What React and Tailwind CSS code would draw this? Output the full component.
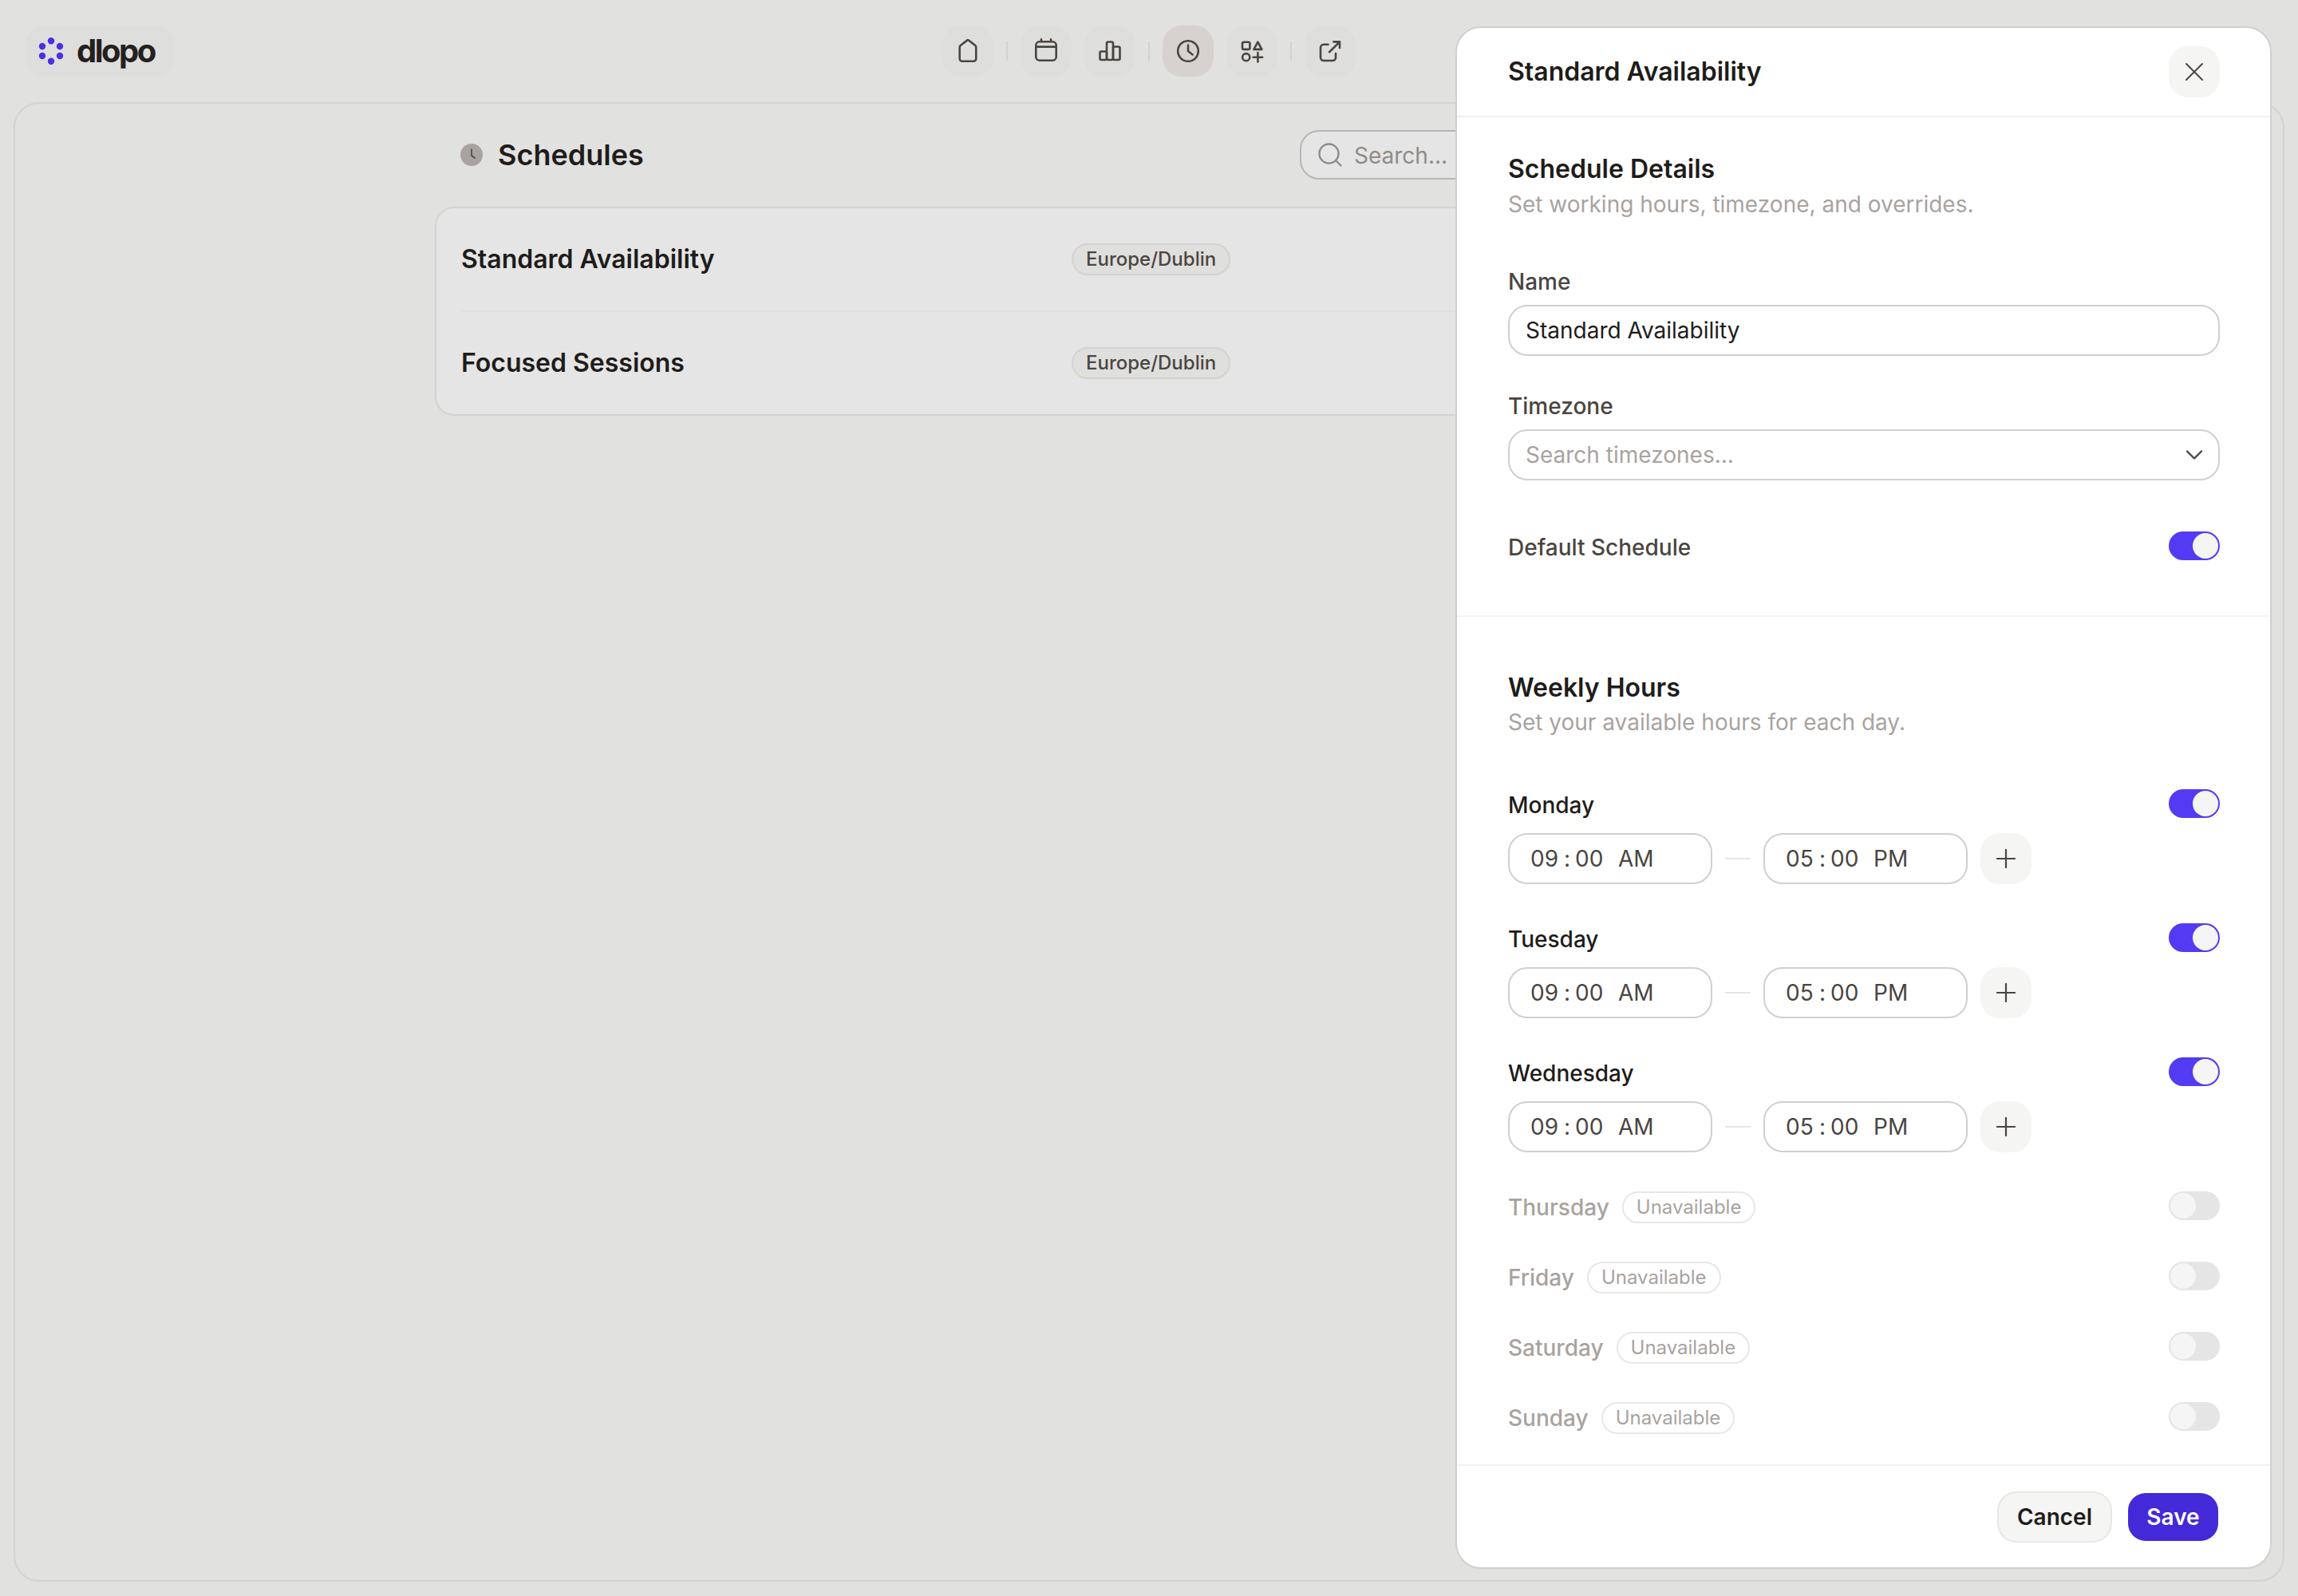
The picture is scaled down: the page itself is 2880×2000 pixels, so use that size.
import { X, Plus, Search, ChevronDown } from "lucide-react";

const ink = "#4a4541";

function HomeIcon() {
    return (
        <svg width="32" height="32" viewBox="0 0 32 32" fill="none" stroke={ink} strokeWidth="2.6" strokeLinejoin="round">
            <path d="M15 2.6a1.6 1.6 0 0 1 2 0l8 6.2c.8.6 1.3 1.5 1.3 2.5V25.5a3.2 3.2 0 0 1-3.2 3.2H8.9a3.2 3.2 0 0 1-3.2-3.2V11.3c0-1 .5-1.9 1.3-2.5z" />
        </svg>
    );
}

function CalendarIcon() {
    return (
        <svg width="32" height="32" viewBox="0 0 32 32" fill="none" stroke={ink} strokeWidth="2.6" strokeLinecap="round">
            <rect x="3.3" y="4.3" width="25.4" height="23.4" rx="4.5" />
            <path d="M3.3 10.6H28.7M10 1.4V4M22 1.4V4" />
        </svg>
    );
}

function ChartIcon() {
    return (
        <svg width="32" height="32" viewBox="0 0 32 32" fill="none" stroke={ink} strokeWidth="2.6" strokeLinejoin="round">
            <rect x="3.5" y="16.5" width="8.5" height="10.5" rx="1.5" />
            <rect x="12" y="4.5" width="8" height="22.5" rx="2" />
            <rect x="20" y="10.5" width="8.5" height="16.5" rx="1.5" />
        </svg>
    );
}

function ClockIcon() {
    return (
        <svg width="32" height="32" viewBox="0 0 32 32" fill="none" stroke={ink} strokeWidth="2.6" strokeLinecap="round" strokeLinejoin="round">
            <circle cx="16" cy="16" r="12.8" />
            <path d="M16 8.5V16l5.6 4.4" />
        </svg>
    );
}

function ShapesIcon() {
    return (
        <svg width="32" height="32" viewBox="0 0 32 32" fill="none" stroke={ink} strokeWidth="2.6" strokeLinecap="round" strokeLinejoin="round">
            <rect x="4" y="4.7" width="9.4" height="9.2" rx="2" />
            <path d="M23.4 4.7l5 9.2H18.4z" />
            <circle cx="8.7" cy="23.7" r="4.6" />
            <path d="M23.4 18v11.4M17.7 23.7h11.4" />
        </svg>
    );
}

function ExternalIcon() {
    return (
        <svg width="32" height="32" viewBox="0 0 32 32" fill="none" stroke={ink} strokeWidth="2.6" strokeLinecap="round" strokeLinejoin="round">
            <path d="M13.5 7.8H8a4 4 0 0 0-4 4V24a4 4 0 0 0 4 4h11a4 4 0 0 0 4-4v-5" />
            <path d="M15 17.2L28 4.4M20.4 4.4H28V12" />
        </svg>
    );
}

function Logo() {
    const dots = [[20, 7.2], [31, 14], [31, 26], [20, 32.8], [9, 26], [9, 14]];
    return (
        <svg width="40" height="40" viewBox="0 0 40 40" fill="#4a30e2">
            {dots.map(([cx, cy]) => (
                <circle key={`${cx}-${cy}`} cx={cx} cy={cy} r="4.2" />
            ))}
        </svg>
    );
}

function NavButton({ active, children }) {
    return (
        <div className={`w-16 h-16 rounded-3xl flex items-center justify-center ${active ? "bg-[#d5d2d0]" : "bg-[#dededc]"}`}>
            {children}
        </div>
    );
}

function NavDivider() {
    return <div className="w-0.5 h-6 bg-[#d5d2d0]" />;
}

function Toggle({ on }) {
    return (
        <div className={`w-16 h-9 rounded-full flex items-center px-0.5 shrink-0 ${on ? "bg-[#523bf2] justify-end" : "bg-[#e5e5e5] justify-start"}`}>
            <div className="w-8 h-8 rounded-full bg-[#f5f5f5]" />
        </div>
    );
}

function TimeField({ hour, period }) {
    return (
        <div className="w-64 h-16 rounded-3xl border-2 border-[#d2cfcd] flex items-center pl-[26px] text-[28px] text-[#4a4541] bg-white">
            <span className="w-[36px]">{hour}</span>
            <span className="w-[20px] text-center">:</span>
            <span className="w-[36px]">00</span>
            <span className="ml-[18px]">{period}</span>
        </div>
    );
}

function DayRow({ day }) {
    return (
        <div>
            <div className="flex items-center justify-between h-9">
                <span className="text-[28px] leading-9 font-medium text-[#1f1c1a] pt-1">{day}</span>
                <Toggle on />
            </div>
            <div className="flex items-center mt-[19px] mb-px">
                <TimeField hour="09" period="AM" />
                <div className="w-8 h-0.5 bg-[#e5e5e5] mx-4" />
                <TimeField hour="05" period="PM" />
                <button className="w-16 h-16 rounded-3xl bg-[#f5f5f4] flex items-center justify-center ml-4">
                    <Plus size={38} strokeWidth={1.4} color={ink} />
                </button>
            </div>
        </div>
    );
}

function OffRow({ day }) {
    return (
        <div className="flex items-start justify-between h-10">
            <div className="flex items-center gap-4">
                <span className="text-[28px] leading-9 font-medium text-[#a8a3a0]">{day}</span>
                <span className="h-10 px-4 rounded-full border-2 border-[#e7e7e6] text-2xl leading-9 text-[#a8a3a0]">Unavailable</span>
            </div>
            <Toggle />
        </div>
    );
}

function ScheduleRow({ name }) {
    return (
        <div className="flex items-center h-32">
            <div className="w-[765px] text-[32px] font-semibold text-[#1f1c1a]">{name}</div>
            <span className="h-10 px-4 rounded-full border-2 border-[#d5d2d0] bg-[#dfdfdd] text-2xl leading-9 font-medium text-[#4a4541]">Europe/Dublin</span>
        </div>
    );
}

export default function App() {
    return (
        <div className="relative w-[2880px] h-[2000px] overflow-hidden bg-[#e1e1df] font-['Inter',sans-serif] flex flex-col">
            <header className="h-32 shrink-0 flex items-start pt-8 px-8">
                <div className="flex-1">
                    <div className="inline-flex items-center h-16 w-[187px] rounded-3xl bg-[#dededc] pl-3 gap-[12px]">
                        <Logo />
                        <span className="text-[40px] leading-none font-bold tracking-[-2.5px] text-[#24201e]">dlopo</span>
                    </div>
                </div>
                <nav className="flex items-center gap-4">
                    <NavButton><HomeIcon /></NavButton>
                    <NavDivider />
                    <NavButton><CalendarIcon /></NavButton>
                    <NavButton><ChartIcon /></NavButton>
                    <NavDivider />
                    <NavButton active><ClockIcon /></NavButton>
                    <NavButton><ShapesIcon /></NavButton>
                    <NavDivider />
                    <NavButton><ExternalIcon /></NavButton>
                </nav>
                <div className="flex-1" />
            </header>

            <main className="mx-[17px] mb-[18px] flex-1 rounded-[32px] border-2 border-[#d5d2d0] pt-[33px]">
                <div className="w-[1790px] mx-auto">
                    <div className="flex items-center justify-between h-[62px] pl-8">
                        <div className="flex items-center gap-[19px]">
                            <svg width="28" height="28" viewBox="0 0 28 28">
                                <circle cx="14" cy="14" r="14" fill="#a8a3a0" />
                                <path d="M14 7v8l4 3" fill="none" stroke="#4a4541" strokeWidth="1.6" strokeLinecap="round" strokeLinejoin="round" />
                            </svg>
                            <h1 className="text-4xl font-semibold text-[#1f1c1a]">Schedules</h1>
                        </div>
                        <div className="w-[706px] h-[62px] rounded-3xl border-2 border-[#b8b6b4] bg-[#e5e5e5] flex items-center pl-[18px] gap-[12px]">
                            <Search size={36} strokeWidth={1.6} color="#8f8b88" />
                            <input readOnly placeholder="Search..." className="flex-1 bg-transparent outline-none text-[28px] pt-0.5 placeholder:text-[#8f8b88]" />
                        </div>
                    </div>

                    <div className="mt-[34px] rounded-3xl border-2 border-[#d5d2d0] bg-[#e5e5e5] px-[31px]">
                        <ScheduleRow name="Standard Availability" />
                        <div className="h-0.5 bg-[#e0e0de]" />
                        <ScheduleRow name="Focused Sessions" />
                    </div>
                </div>
            </main>

            <aside className="absolute top-[33px] left-[1824px] w-[1023px] h-[1933px] rounded-[32px] border-2 border-[#d2cfcd] bg-white flex flex-col overflow-hidden">
                <div className="h-[112px] shrink-0 border-b-2 border-[#f0f0ef] flex items-center justify-between pl-16 pr-[63px]">
                    <h2 className="text-[32px] font-semibold text-[#1f1c1a]">Standard Availability</h2>
                    <button className="w-16 h-16 rounded-3xl bg-[#f5f5f4] flex items-center justify-center">
                        <X size={40} strokeWidth={1.2} color={ink} />
                    </button>
                </div>

                <div className="flex-1 flex flex-col">
                    <section className="h-[626px] shrink-0 border-b-2 border-[#f5f5f4] pl-16 pr-[63px] pt-[45px]">
                        <h3 className="text-[32px] leading-10 font-semibold text-[#1f1c1a]">Schedule Details</h3>
                        <p className="mt-[6px] text-[28px] leading-9 text-[#a8a3a0]">Set working hours, timezone, and overrides.</p>

                        <label className="block mt-[61px] text-[28px] leading-9 font-medium text-[#4a4541]">Name</label>
                        <input readOnly value="Standard Availability" className="block mt-[11px] w-full h-16 rounded-3xl border-2 border-[#d2cfcd] px-[20px] text-[28px] text-[#1f1c1a] outline-none" />

                        <label className="block mt-[45px] text-[28px] leading-9 font-medium text-[#4a4541]">Timezone</label>
                        <div className="mt-[11px] h-16 rounded-3xl border-2 border-[#d2cfcd] flex items-center pl-[20px] pr-[12px]">
                            <input readOnly placeholder="Search timezones..." className="flex-1 text-[28px] outline-none placeholder:text-[#a8a3a0]" />
                            <ChevronDown size={36} strokeWidth={1.6} color={ink} />
                        </div>

                        <div className="mt-[64px] flex items-center justify-between h-9">
                            <span className="text-[28px] leading-9 font-medium text-[#4a4541] pt-1">Default Schedule</span>
                            <Toggle on />
                        </div>
                    </section>

                    <section className="pl-16 pr-[63px] pt-[69px]">
                        <h3 className="text-[32px] leading-10 font-semibold text-[#1f1c1a]">Weekly Hours</h3>
                        <p className="mt-[5px] text-[28px] leading-9 text-[#a8a3a0]">Set your available hours for each day.</p>

                        <div className="mt-[66px] flex flex-col gap-12">
                            <DayRow day="Monday" />
                            <DayRow day="Tuesday" />
                            <DayRow day="Wednesday" />
                            <OffRow day="Thursday" />
                            <OffRow day="Friday" />
                            <OffRow day="Saturday" />
                            <OffRow day="Sunday" />
                        </div>
                    </section>
                </div>

                <div className="h-[129px] shrink-0 border-t-2 border-[#f0f0ef] flex items-center justify-end gap-[18px] pl-16 pr-[63px]">
                    <button className="w-[144px] h-16 rounded-3xl border-2 border-[#e7e7e6] bg-[#f5f5f4] text-[28px] font-semibold text-[#1f1c1a]">Cancel</button>
                    <button className="w-[117px] h-16 rounded-3xl border-2 border-transparent bg-clip-padding bg-[#4429d8] text-[28px] font-semibold text-white">Save</button>
                </div>
            </aside>
        </div>
    );
}
